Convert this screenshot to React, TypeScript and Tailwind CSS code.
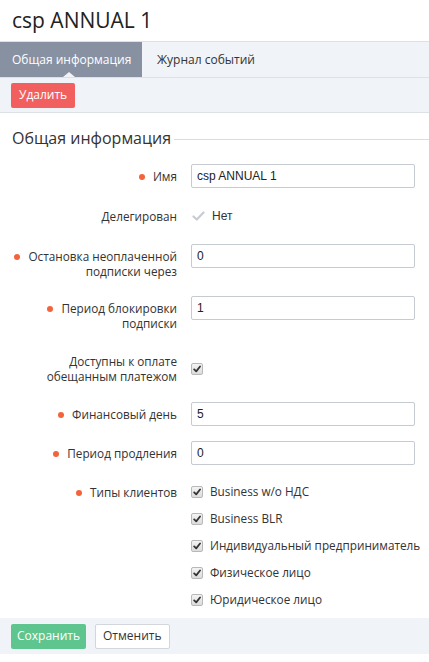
import React from "react";

const sans = "font-['Open_Sans',sans-serif]";
const arial = "font-['Liberation_Sans',Arial,sans-serif]";

const Dot = () => (
    <span className="inline-block w-[6px] h-[6px] rounded-full bg-[#f2643c] mr-[8px] align-middle relative -top-[1px]" />
);

const Check = ({ className = "" }: { className?: string }) => (
    <span
        className={
            "inline-flex shrink-0 items-center justify-center w-[12px] h-[12px] rounded-[2px] border border-[#b8b8b8] bg-gradient-to-b from-[#f4f4f4] to-[#dcdcdc] " +
            className
        }
    >
        <svg width="8" height="8" viewBox="0 0 10 10">
            <path d="M1.5 5.5 L4 8 L8.8 1.8" fill="none" stroke="#333" strokeWidth="2.2" strokeLinecap="round" strokeLinejoin="round" />
        </svg>
    </span>
);

type RowProps = {
    label: React.ReactNode;
    required?: boolean;
    children: React.ReactNode;
    className?: string;
};

const Row = ({ label, required, children, className = "" }: RowProps) => (
    <div className={"grid gap-[14px] pr-[14px] " + className} style={{ gridTemplateColumns: "177px 1fr" }}>
        <div className="text-right text-[11.75px] leading-[15px] text-[#333] pt-[5px] pb-[3px]">
            {required && <Dot />}
            {label}
        </div>
        <div>{children}</div>
    </div>
);

const Input = ({ value }: { value: string }) => (
    <div className={"h-[24px] border border-[#c6cbd1] rounded-[2px] px-[5px] flex items-center text-[12px] text-[#222] " + arial}>
        {value}
    </div>
);

const clientTypes = [
    "Business w/o НДС",
    "Business BLR",
    "Индивидуальный предприниматель",
    "Физическое лицо",
    "Юридическое лицо",
];

export default function App() {
    return (
        <div className={"w-[429px] h-[662px] bg-white overflow-hidden " + sans}>
            <div className="h-[42px] px-[12px] flex items-center text-[21px] text-[#222] border-b border-[#dde1e6]">
                csp ANNUAL 1
            </div>
            <div className="h-[36px] bg-[#f0f3f7] flex border-b border-[#dde1e6] text-[12px] whitespace-nowrap">
                <div className="relative bg-[#8891a2] text-white pl-[12px] w-[142px] flex items-center">
                    Общая информация
                    <span className="absolute left-[63px] bottom-0 w-0 h-0 border-l-[6px] border-r-[6px] border-b-[5px] border-l-transparent border-r-transparent border-b-[#f0f3f7]" />
                </div>
                <div className="px-[15px] flex items-center text-[#333]">Журнал событий</div>
            </div>
            <div className="h-[35px] bg-[#f0f3f7] border-b border-[#dde1e6] px-[11px] flex items-center">
                <button className="h-[25px] px-[8px] rounded-[2px] bg-[#f25f5f] text-white text-[12px] leading-none">
                    Удалить
                </button>
            </div>

            <div className="flex items-center mt-[14px] pl-[12px]">
                <span className="text-[16px] text-[#333] leading-[22px]">Общая информация</span>
                <span className="flex-1 h-px bg-[#d9dde2] ml-[3px] mt-[2px]" />
            </div>

            <div className="mt-[15px]">
                <Row label="Имя" required>
                    <Input value="csp ANNUAL 1" />
                </Row>
                <Row label="Делегирован" className="mt-[16px]">
                    <div className={"h-[24px] flex items-center text-[12px] text-[#333] " + arial}>
                        <svg width="13" height="10" viewBox="0 0 13 10" className="mr-[7px] ml-[1px]">
                            <path d="M1.5 5.5 L4.8 8.5 L11.5 1.5" fill="none" stroke="#c8ccd2" strokeWidth="2.2" strokeLinecap="round" strokeLinejoin="round" />
                        </svg>
                        Нет
                    </div>
                </Row>
                <Row label={<>Остановка неоплаченной<br />подписки через</>} required className="mt-[16px]">
                    <Input value="0" />
                </Row>
                <Row label={<>Период блокировки<br />подписки</>} required className="mt-[14px]">
                    <Input value="1" />
                </Row>
                <Row label={<>Доступны к оплате<br />обещанным платежом</>} className="mt-[15px]">
                    <div className="pt-[6px]">
                        <Check />
                    </div>
                </Row>
                <Row label="Финансовый день" required className="mt-[15px]">
                    <Input value="5" />
                </Row>
                <Row label="Период продления" required className="mt-[15px]">
                    <Input value="0" />
                </Row>
                <Row label="Типы клиентов" required className="mt-[15px]">
                    <div className="flex flex-col gap-[13px] pt-[5px]">
                        {clientTypes.map((t) => (
                            <div key={t} className="flex items-center h-[14px] text-[11.75px] text-[#333] whitespace-nowrap">
                                <Check className="mr-[7px]" />
                                {t}
                            </div>
                        ))}
                    </div>
                </Row>
            </div>

            <div className="mt-[11px] h-[36px] bg-[#f0f3f7] px-[11px] flex items-center gap-[9px]">
                <button className="h-[25px] px-[6px] rounded-[2px] bg-[#5fc58e] text-white text-[12px] leading-none">
                    Сохранить
                </button>
                <button className="h-[25px] px-[7px] rounded-[2px] bg-white border border-[#d3d7dc] text-[#333] text-[12px] leading-none">
                    Отменить
                </button>
            </div>
        </div>
    );
}
